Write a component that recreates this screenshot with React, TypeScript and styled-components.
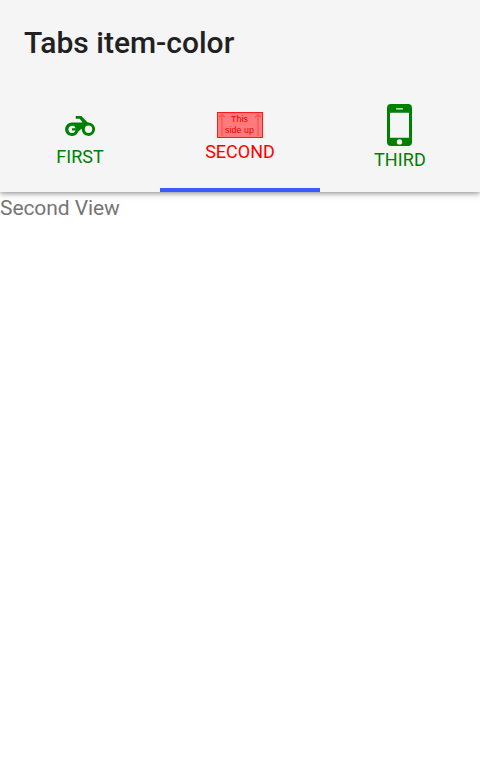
import React from 'react';
import styled, { createGlobalStyle } from 'styled-components';

const GlobalStyle = createGlobalStyle`
  body { margin: 0; background: #fff; font-family: Roboto, sans-serif; }
`;
const Screen = styled.main`
  display: flex;
  flex-direction: column;
  height: 764px;
  overflow: hidden;
`;
const Header = styled.header`
  flex: none;
  height: 192px;
  background: #f5f5f5;
  box-shadow: 0 1px 6px rgba(0, 0, 0, 0.5);
`;
const Title = styled.h1`
  box-sizing: border-box;
  margin: 0;
  height: 84px;
  padding-left: 24px;
  font-size: 30px;
  font-weight: 500;
  line-height: 86px;
  color: #212121;
`;
const TabBar = styled.nav`
  display: grid;
  grid-template-columns: repeat(3, 1fr);
  height: 108px;
`;
const Tab = styled.button<{ $active?: boolean; $top: number }>`
  box-sizing: border-box;
  display: flex;
  flex-direction: column;
  align-items: center;
  margin: 0;
  padding: ${(p) => p.$top}px 0 0;
  border: 0;
  border-bottom: 4px solid ${(p) => (p.$active ? '#3d5afe' : 'transparent')};
  background: none;
  color: ${(p) => (p.$active ? '#ff0000' : '#008000')};
  font-family: inherit;
`;
const Label = styled.span<{ $gap: number; $spacing?: number }>`
  margin-top: ${(p) => p.$gap}px;
  font-size: 18px;
  line-height: 22px;
  letter-spacing: ${(p) => p.$spacing ?? 0}px;
`;
const Content = styled.section`
  font-size: 21px;
  line-height: 32px;
  letter-spacing: -0.08px;
  color: #757575;
`;
const Icon = styled.svg`
  display: block;
  flex: none;
`;
const PhoneIcon = styled(Icon)`
  margin-right: 1px;
`;

const Motorcycle = () => (
  <Icon width="30" height="20" viewBox="0 0 30 20" fill="currentColor">
    <path
      fillRule="evenodd"
      d="M10.7 0H16.3L22.8 6.5A6.7 6.7 0 1 1 16.7 12.4L13.3 15.4A6.8 6.8 0 1 1 6.8 6.4H17.6L14.6 2.8H10.7ZM23.5 9.5A3.7 3.7 0 1 0 23.5 16.9A3.7 3.7 0 1 0 23.5 9.5ZM10.6 12.2A3.7 3.7 0 1 0 10.6 14.6H7V12.2Z"
    />
  </Icon>
);
const SideUp = () => (
  <Icon width="46" height="26" viewBox="0 0 46 26">
    <rect x=".5" y=".5" width="45" height="25" fill="#ff7b7b" stroke="#ff1a1a" />
    <path d="M5 24V3M2 5.5L5 2.5L8 5.5M41 24V3M38 5.5L41 2.5L44 5.5" fill="none" stroke="#ff5252" strokeWidth="1.3" />
    <g fill="#e90000" fontFamily="Liberation Sans, sans-serif" fontSize="8.8" textAnchor="middle">
      <text x="22.5" y="10" textLength="17">This</text>
      <text x="22.5" y="21" textLength="29">side up</text>
    </g>
  </Icon>
);
const Phone = () => (
  <PhoneIcon width="25" height="42" viewBox="0 0 25 42" fill="currentColor">
    <path fillRule="evenodd" d="M4 0H21Q25 0 25 4V38Q25 42 21 42H4Q0 42 0 38V4Q0 0 4 0ZM3.5 8.7Q3 8.7 3 9.2V33.3Q3 33.8 3.5 33.8H21.5Q22 33.8 22 33.3V9.2Q22 8.7 21.5 8.7ZM9.5 4.2Q9 4.2 9 4.8T9.5 5.4H15.5Q16 5.4 16 4.8T15.5 4.2ZM12.5 35.2A2.7 2.7 0 1 0 12.5 40.6A2.7 2.7 0 1 0 12.5 35.2Z" />
  </PhoneIcon>
);

export default function App() {
  return (
    <>
      <GlobalStyle />
      <Screen>
        <Header>
          <Title>Tabs item-color</Title>
          <TabBar>
            <Tab $top={31.5}>
              <Motorcycle />
              <Label $gap={10}>FIRST</Label>
            </Tab>
            <Tab $active $top={28}>
              <SideUp />
              <Label $gap={3}>SECOND</Label>
            </Tab>
            <Tab $top={20}>
              <Phone />
              <Label $gap={3} $spacing={0.15}>THIRD</Label>
            </Tab>
          </TabBar>
        </Header>
        <Content>Second View</Content>
      </Screen>
    </>
  );
}
